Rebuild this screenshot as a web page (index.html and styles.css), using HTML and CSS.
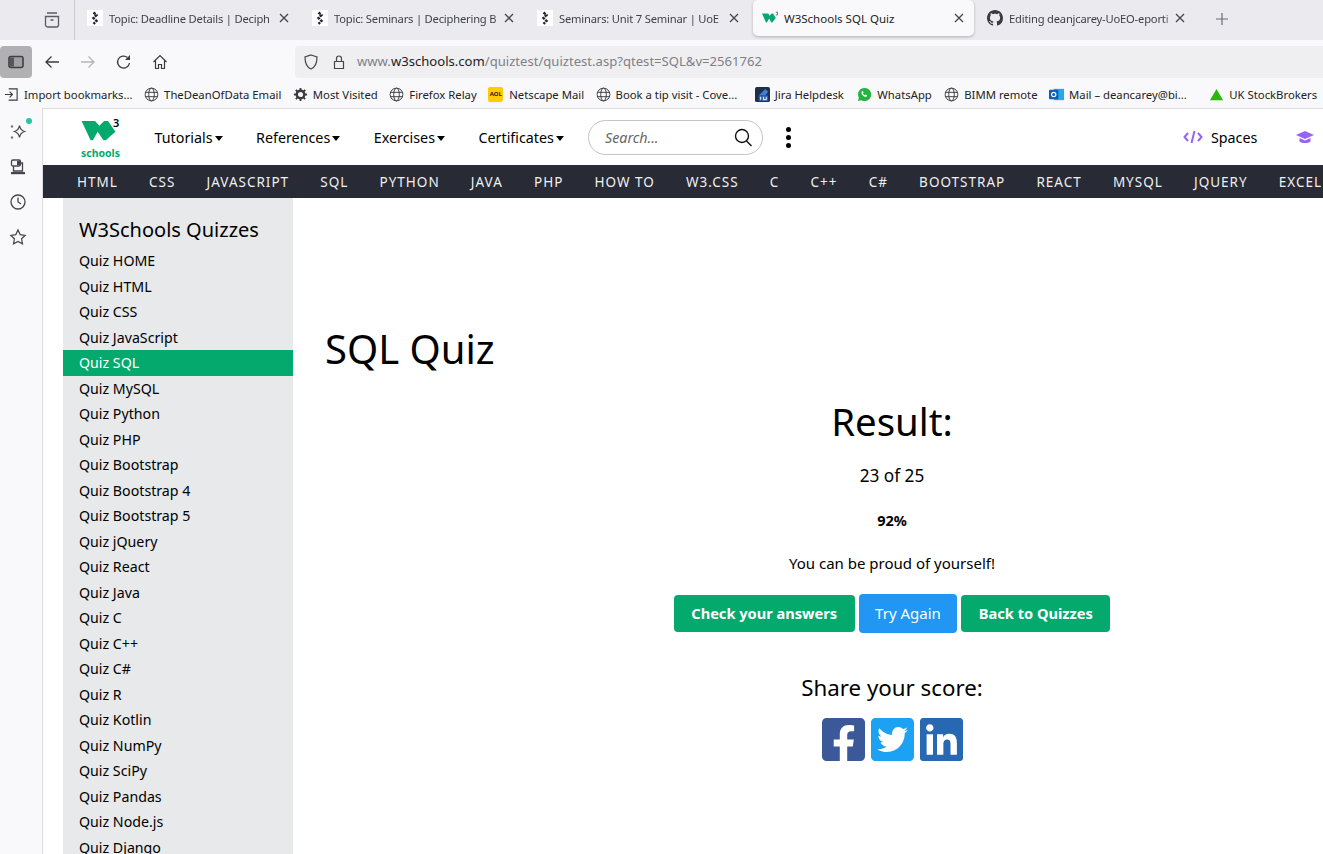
FILE: index.html
```html
<!DOCTYPE html>
<html lang="en">
<head>
    <meta charset="UTF-8">
    <title>W3Schools SQL Quiz</title>
    <link rel="stylesheet" href="styles.css">
</head>
<body>
    <svg class="defs" width="0" height="0">
        <symbol id="globe" viewBox="0 0 16 16"><g fill="none" stroke="#3a3a40" stroke-width="1"><circle cx="8" cy="8" r="6.8"/><ellipse cx="8" cy="8" rx="3" ry="6.8"/><path d="M1.5 5.7h13M1.5 10.3h13"/></g></symbol>
        <symbol id="site" viewBox="0 0 16 16"><rect width="16" height="16" fill="#fff"/><path d="M6.500 2.500L9.500 5 6.500 8l3 3-3 2.800" fill="none" stroke="#222" stroke-width="2.400" stroke-dasharray="2.600 1"/></symbol>
        <symbol id="close" viewBox="0 0 10 10"><path d="M1 1l8 8M9 1l-8 8" stroke="#45454c" stroke-width="1.300" fill="none"/></symbol>
    </svg>

    <!-- tab strip -->
    <div class="tabs">
        <div class="tab-list-btn">
            <svg width="18" height="18" viewBox="0 0 18 18" fill="none" stroke="#5b5b66" stroke-width="1.300"><path d="M4 2h10M2.500 5.500h13V14a2 2 0 0 1-2 2h-9a2 2 0 0 1-2-2zM7.500 9h3"/></svg>
        </div>
        <div class="tab">
            <svg class="fav"><use href="#site"/></svg>
            <span class="tab-title">Topic: Deadline Details | Deciph</span>
            <svg class="tab-x"><use href="#close"/></svg>
        </div>
        <div class="tab">
            <svg class="fav"><use href="#site"/></svg>
            <span class="tab-title">Topic: Seminars | Deciphering B</span>
            <svg class="tab-x"><use href="#close"/></svg>
        </div>
        <div class="tab third">
            <svg class="fav"><use href="#site"/></svg>
            <span class="tab-title">Seminars: Unit 7 Seminar | UoE</span>
            <svg class="tab-x"><use href="#close"/></svg>
        </div>
        <div class="tab active">
            <svg class="fav" viewBox="0 0 18 16"><path d="M0 3h7l1.500 2.500L11 3h1.500l3 5-4 5h-1L8 8.500 5.500 13h-1z" fill="#04aa6d"/><path d="M15.500 1.500h2v3h-2" fill="none" stroke="#222" stroke-width=".7"/></svg>
            <span class="tab-title plain">W3Schools SQL Quiz</span>
            <svg class="tab-x"><use href="#close"/></svg>
        </div>
        <div class="tab last">
            <svg class="fav" viewBox="0 0 16 16"><path fill="#3a3a40" d="M8 0C3.580 0 0 3.580 0 8c0 3.540 2.290 6.530 5.470 7.590.4.070.55-.17.55-.38 0-.19-.01-.82-.01-1.490-2.010.37-2.530-.49-2.690-.94-.09-.23-.48-.94-.82-1.130-.28-.15-.68-.52-.01-.53.63-.01 1.080.58 1.230.82.72 1.210 1.870.87 2.330.66.07-.52.28-.87.51-1.070-1.780-.2-3.640-.89-3.640-3.950 0-.87.31-1.590.82-2.150-.08-.2-.36-1.020.08-2.120 0 0 .67-.21 2.200.82.64-.18 1.320-.27 2-.27.68 0 1.360.09 2 .27 1.530-1.040 2.200-.82 2.200-.82.44 1.100.16 1.920.08 2.120.51.56.82 1.270.82 2.150 0 3.070-1.870 3.750-3.650 3.950.29.25.54.73.54 1.480 0 1.070-.01 1.930-.01 2.200 0 .21.15.46.55.38A8.013 8.013 0 0016 8c0-4.420-3.580-8-8-8z"/></svg>
            <span class="tab-title">Editing deanjcarey-UoEO-eporti</span>
            <svg class="tab-x"><use href="#close"/></svg>
        </div>
        <svg class="new-tab" width="14" height="14" viewBox="0 0 14 14"><path d="M7 1v12M1 7h12" stroke="#6a6a72" stroke-width="1.200"/></svg>
    </div>

    <!-- toolbar -->
    <div class="toolbar">
        <div class="side-toggle"><svg width="16" height="14" viewBox="0 0 16 14"><rect x="1" y="1.500" width="14" height="11" rx="2" fill="#a0a0a4" stroke="#3f3f45" stroke-width="1.600"/><rect x="2" y="2.500" width="4" height="9" fill="#55555b"/></svg></div>
        <svg class="tool-icon" viewBox="0 0 16 16"><path d="M15 8H2M7.500 2.500L2 8l5.500 5.500" fill="none" stroke="#3a3a40" stroke-width="1.300"/></svg>
        <svg class="tool-icon" viewBox="0 0 16 16"><path d="M1 8h13M8.500 2.500L14 8l-5.500 5.500" fill="none" stroke="#b4b4ba" stroke-width="1.300"/></svg>
        <svg class="tool-icon" viewBox="0 0 16 16"><path d="M13.500 9a6 6 0 1 1-2-5.500" fill="none" stroke="#3a3a40" stroke-width="1.300"/><path d="M14 1v5H9z" fill="#3a3a40"/></svg>
        <svg class="tool-icon" viewBox="0 0 16 16"><path d="M1.500 8L8 1.500 14.500 8M3.500 6.500V14.500h3v-4h3v4h3V6.500" fill="none" stroke="#3a3a40" stroke-width="1.200"/></svg>
        <div class="url-bar">
            <svg class="url-icon" viewBox="0 0 16 16"><path d="M8 1l6 2c0 6-1 10-6 12C3 13 2 9 2 3z" fill="none" stroke="#45454c" stroke-width="1.200"/></svg>
            <svg class="url-icon" viewBox="0 0 16 16"><path d="M3.500 7.500h9v7h-9zM5.500 7.500V4.500a2.500 2.500 0 0 1 5 0v3" fill="none" stroke="#45454c" stroke-width="1.200"/></svg>
            <span class="url"><span class="url-soft">www.</span>w3schools.com<span class="url-soft">/quiztest/quiztest.asp?qtest=SQL&amp;v=2561762</span></span>
        </div>
    </div>

    <!-- bookmarks -->
    <div class="bookmarks">
        <span class="mark"><svg class="mark-icon" viewBox="0 0 16 16"><path d="M1 8h8M6 5l3 3-3 3M5 2h9v12H5" fill="none" stroke="#3a3a40" stroke-width="1.200"/></svg>Import bookmarks...</span>
        <span class="mark"><svg class="mark-icon"><use href="#globe"/></svg>TheDeanOfData Email</span>
        <span class="mark"><svg class="mark-icon" viewBox="0 0 16 16"><circle cx="8" cy="8" r="4" fill="none" stroke="#3a3a40" stroke-width="2.500"/><path d="M8 1v14M1 8h14M3 3l10 10M13 3L3 13" stroke="#3a3a40" stroke-width="2" stroke-dasharray="2.500 9"/></svg>Most Visited</span>
        <span class="mark"><svg class="mark-icon"><use href="#globe"/></svg>Firefox Relay</span>
        <span class="mark"><span class="aol">AOL</span>Netscape Mail</span>
        <span class="mark"><svg class="mark-icon"><use href="#globe"/></svg>Book a tip visit - Cove...</span>
        <span class="mark jira"><svg class="mark-icon" viewBox="0 0 16 16"><rect width="16" height="16" rx="2" fill="#1e2f4a"/><path d="M4 9l7-7 3 3-3 4z" fill="#3d7fd6"/><rect x="4" y="9" width="10" height="6" fill="#2f62a8"/><path d="M6 10.500v3M9 10.500v3h3v-3" fill="none" stroke="#fff" stroke-width="1"/></svg>Jira Helpdesk</span>
        <span class="mark whatsapp"><svg class="mark-icon" viewBox="0 0 16 16"><path d="M8 1a7 7 0 0 0-6 10.500L1 15l3.600-1A7 7 0 1 0 8 1z" fill="#25b33f"/><path d="M5.500 4.500c-1 1-1 2.500.5 4.200s3.200 2.300 4.300 1.400l.4-1.200-1.600-.9-.8.8c-1-.4-1.700-1.200-2-2l.7-.8-.8-1.700z" fill="#fff"/></svg>WhatsApp</span>
        <span class="mark bimm"><svg class="mark-icon"><use href="#globe"/></svg>BIMM remote</span>
        <span class="mark"><svg class="mark-icon" viewBox="0 0 16 16"><rect x="5" y="2" width="11" height="12" fill="#28a8ea"/><rect y="3" width="10" height="10" rx="1" fill="#0f5fb0"/><circle cx="5" cy="8" r="2.300" fill="none" stroke="#fff" stroke-width="1.300"/></svg>Mail – deancarey@bi...</span>
        <span class="mark wide"><svg class="mark-icon" viewBox="0 0 16 16"><path d="M8 2l7 12H1z" fill="#2eb50c"/></svg>UK StockBrokers</span>
    </div>

    <div class="browser">
        <!-- firefox sidebar -->
        <div class="rail">
            <span class="rail-btn">
                <svg class="rail-icon" viewBox="0 0 18 18"><path d="M10.500 2.500c.6 3.400 1.900 5 5 6-3.100 1-4.400 2.600-5 6-.6-3.400-1.900-5-5-6 3.100-1 4.400-2.600 5-6z" fill="none" stroke="#45454c" stroke-width="1.300"/><circle cx="3" cy="3.500" r="1.200" fill="#77777d"/><circle cx="3" cy="14.500" r="1.200" fill="#77777d"/></svg>
                <span class="rail-dot"></span>
            </span>
            <svg class="rail-icon" viewBox="0 0 18 18"><rect x="2.500" y="2" width="9" height="6" rx="1.500" fill="none" stroke="#45454c" stroke-width="1.300"/><rect x="8" y="3" width="3" height="4" fill="#45454c"/><path d="M4.500 8v5h9V5h-2" fill="none" stroke="#45454c" stroke-width="1.300"/><path d="M2 14h14v2.200H2z" fill="#45454c"/></svg>
            <svg class="rail-icon" viewBox="0 0 18 18"><circle cx="9" cy="9" r="7" fill="none" stroke="#45454c" stroke-width="1.300"/><path d="M9 4.500V9l3 2" fill="none" stroke="#45454c" stroke-width="1.300"/></svg>
            <svg class="rail-icon" viewBox="0 0 18 18"><path d="M9 2l2.200 4.600 5 .7-3.600 3.500.9 5L9 13.400l-4.500 2.400.9-5L1.800 7.300l5-.7z" fill="none" stroke="#45454c" stroke-width="1.200"/></svg>
        </div>

        <div class="page">
            <div class="top-nav">
                <div class="logo">
                    <span class="logo-top">
                        <svg class="logo-w" viewBox="30 35 105 62"><path d="M30 35h42l13 15 15-15h12l23 33-30 27h-7L80 68 65 95h-7z" fill="#04aa6d"/></svg>
                        <span class="logo-3">3</span>
                    </span>
                    <span class="logo-name">schools</span>
                </div>
                <span class="nav-link">Tutorials<i class="caret"></i></span>
                <span class="nav-link">References<i class="caret"></i></span>
                <span class="nav-link">Exercises<i class="caret"></i></span>
                <span class="nav-link">Certificates<i class="caret"></i></span>
                <div class="search">
                    <span class="search-text">Search...</span>
                    <svg width="19" height="19" viewBox="0 0 19 19" fill="none" stroke="#111" stroke-width="1.400"><circle cx="8" cy="8" r="6.500"/><path d="M12.500 13l5 5"/></svg>
                </div>
                <div class="dots"><i></i><i></i><i></i></div>
                <div class="spaces">
                    <svg width="20" height="14" viewBox="0 0 20 14" fill="none" stroke="#9763f6" stroke-width="2"><path d="M5 3L1.500 7 5 11M15 3l3.500 4L15 11M11.500 1l-3 12"/></svg>
                    <span>Spaces</span>
                </div>
                <svg class="cap" width="18" height="14" viewBox="0 0 18 14"><path d="M9 1L0 5l9 4 9-4z" fill="#9763f6"/><path d="M3.500 8v3.500C6 13.500 12 13.500 14.500 11.500V8L9 10.500z" fill="#9763f6"/></svg>
            </div>

            <div class="sub-nav">
                <span>HTML</span><span>CSS</span><span>JAVASCRIPT</span><span>SQL</span><span>PYTHON</span><span>JAVA</span><span>PHP</span><span>HOW TO</span><span>W3.CSS</span><span>C</span><span>C++</span><span>C#</span><span>BOOTSTRAP</span><span>REACT</span><span>MYSQL</span><span>JQUERY</span><span>EXCEL</span>
            </div>

            <div class="content">
                <aside class="quiz-menu">
                    <h2>W3Schools Quizzes</h2>
                    <a>Quiz HOME</a>
                    <a>Quiz HTML</a>
                    <a>Quiz CSS</a>
                    <a>Quiz JavaScript</a>
                    <a class="current">Quiz SQL</a>
                    <a>Quiz MySQL</a>
                    <a>Quiz Python</a>
                    <a>Quiz PHP</a>
                    <a>Quiz Bootstrap</a>
                    <a>Quiz Bootstrap 4</a>
                    <a>Quiz Bootstrap 5</a>
                    <a>Quiz jQuery</a>
                    <a>Quiz React</a>
                    <a>Quiz Java</a>
                    <a>Quiz C</a>
                    <a>Quiz C++</a>
                    <a>Quiz C#</a>
                    <a>Quiz R</a>
                    <a>Quiz Kotlin</a>
                    <a>Quiz NumPy</a>
                    <a>Quiz SciPy</a>
                    <a>Quiz Pandas</a>
                    <a>Quiz Node.js</a>
                    <a>Quiz Django</a>
                </aside>

                <main class="quiz-main">
                    <h1>SQL Quiz</h1>
                    <div class="result">
                        <h2 class="result-title">Result:</h2>
                        <p class="score">23 of 25</p>
                        <p class="percent">92%</p>
                        <p class="proud">You can be proud of yourself!</p>
                        <div class="buttons">
                            <a class="btn green">Check your answers</a>
                            <a class="btn blue">Try Again</a>
                            <a class="btn green">Back to Quizzes</a>
                        </div>
                        <h3 class="share">Share your score:</h3>
                        <div class="social">
                            <svg viewBox="0 32 448 448"><path fill="#3b5998" d="M400 32H48A48 48 0 0 0 0 80v352a48 48 0 0 0 48 48h137.250V327.690h-63V256h63v-54.640c0-62.150 37-96.480 93.670-96.480 27.140 0 55.520 4.840 55.520 4.840v61h-31.270c-30.810 0-40.420 19.120-40.420 38.730V256h68.780l-11 71.690h-57.780V480H400a48 48 0 0 0 48-48V80a48 48 0 0 0-48-48z"/></svg>
                            <svg viewBox="0 32 448 448"><path fill="#1da1f2" d="M400 32H48C21.500 32 0 53.500 0 80v352c0 26.500 21.500 48 48 48h352c26.500 0 48-21.500 48-48V80c0-26.500-21.500-48-48-48zm-48.900 158.800c.2 2.800.2 5.700.2 8.500 0 86.700-66 186.600-186.600 186.600-37.200 0-71.700-10.800-100.700-29.400 5.300.6 10.400.8 15.800.8 30.700 0 58.900-10.400 81.400-28-28.800-.6-53-19.500-61.300-45.500 10.100 1.500 19.200 1.500 29.600-1.200-30-6.100-52.500-32.500-52.500-64.400v-.8c8.700 4.900 18.900 7.900 29.600 8.300a65.447 65.447 0 0 1-29.200-54.600c0-12.200 3.200-23.400 8.900-33.100 32.300 39.800 80.800 65.800 135.200 68.600-9.300-44.500 24-80.600 64-80.600 18.900 0 35.900 7.900 47.900 20.700 14.800-2.800 29-8.300 41.600-15.800-4.900 15.200-15.100 27.900-29.600 36.300 13.200-1.400 26-5.100 37.800-10.200-8.900 13.100-20.100 24.700-32.900 34z"/></svg>
                            <svg viewBox="0 32 448 448"><path fill="#2867b2" d="M416 32H31.900C14.300 32 0 46.500 0 64.300v383.400C0 465.500 14.300 480 31.900 480H416c17.600 0 32-14.500 32-32.300V64.300c0-17.800-14.400-32.300-32-32.300zM135.400 416H69V202.200h66.500V416zm-33.200-243c-21.300 0-38.500-17.300-38.500-38.500S80.900 96 102.200 96c21.200 0 38.500 17.300 38.500 38.500 0 21.300-17.200 38.500-38.500 38.500zm282.100 243h-66.400V312c0-24.800-.5-56.700-34.500-56.700-34.600 0-39.900 27-39.900 54.900V416h-66.400V202.200h63.700v29.200h.9c8.900-16.800 30.600-34.500 62.900-34.500 67.200 0 79.700 44.300 79.700 101.900V416z"/></svg>
                        </div>
                    </div>
                </main>
            </div>
        </div>
    </div>
</body>
</html>
```

FILE: styles.css
```css
html, body {
    height: 854px;
    overflow: hidden;
}

body {
    margin: 0;
    font-family: "Noto Sans", "Open Sans", sans-serif;
    color: #000;
    background-color: #f9f9fb;
}

.defs {
    position: absolute;
}

/* tab strip */
.tabs {
    display: flex;
    align-items: flex-start;
    height: 40px;
    padding-left: 33px;
    background-color: #eaeaef;
    overflow: hidden;
}

.tab-list-btn {
    display: flex;
    align-items: center;
    width: 42px;
    height: 40px;
    padding-left: 10px;
    margin-right: 10px;
    box-sizing: border-box;
    border-right: 1px solid #c9c9cf;
}

.tab {
    display: flex;
    align-items: center;
    flex: none;
    width: 225px;
    height: 36px;
    padding: 0 21px 0 2px;
    box-sizing: border-box;
    font-size: 11.2px;
    letter-spacing: -0.2px;
    color: #3f3f46;
}

.tab.third {
    width: 218px;
    padding-right: 14px;
}

.tab.active {
    width: 221px;
    margin-right: 3px;
    padding: 0 10px 0 9px;
    background-color: #f9f9fb;
    border-radius: 5px;
    box-shadow: 0 1px 3px rgba(0, 0, 0, 0.25);
    font-size: 11.5px;
    letter-spacing: 0;
    color: #222;
}

.tab.last {
    width: 217px;
    padding: 0 9px 0 10px;
}

.fav {
    flex: none;
    width: 16px;
    height: 16px;
    margin-right: 6px;
}

.tab-title {
    flex: 1;
    min-width: 0;
    white-space: nowrap;
    -webkit-mask-image: linear-gradient(to left, transparent 0, #000 8px);
    mask-image: linear-gradient(to left, transparent 0, #000 8px);
}

.tab-title.plain {
    -webkit-mask-image: none;
    mask-image: none;
}

.tab-x {
    flex: none;
    width: 10px;
    height: 10px;
    margin-left: 2px;
}

.new-tab {
    margin: 12px 0 0 21px;
}

/* toolbar */
.toolbar {
    display: flex;
    align-items: center;
    height: 40px;
    padding-top: 4px;
    box-sizing: border-box;
}

.side-toggle {
    display: flex;
    align-items: center;
    justify-content: center;
    width: 32px;
    height: 32px;
    margin-right: 12px;
    background-color: #b1b1b4;
    border-radius: 4px;
}

.tool-icon {
    width: 16px;
    height: 16px;
    margin-right: 20px;
}

.url-bar {
    display: flex;
    align-items: center;
    flex: 1;
    height: 32px;
    margin-left: 107px;
    padding-left: 8px;
    background-color: #efeff2;
    border-radius: 4px 0 0 4px;
}

.url-icon {
    width: 16px;
    height: 16px;
    margin-right: 12px;
}

.url {
    margin: 0 0 2px -2px;
    font-size: 13.1px;
    color: #222;
}

.url-soft {
    color: #808086;
}

/* bookmarks */
.bookmarks {
    display: flex;
    align-items: center;
    gap: 11.5px;
    height: 28px;
    padding-left: 4px;
    font-size: 11.3px;
    color: #222;
    white-space: nowrap;
}

.mark {
    display: flex;
    align-items: center;
}

.mark-icon {
    width: 15px;
    height: 15px;
    margin-right: 5px;
}

.mark.jira {
    margin-left: 6px;
}

.mark.whatsapp {
    margin-left: 2px;
}

.mark.bimm {
    margin-left: 1px;
}

.mark.wide {
    margin-left: 11px;
}

.aol {
    width: 15px;
    height: 15px;
    margin-right: 6px;
    background-color: #ffcc00;
    border-radius: 2px;
    font-size: 6px;
    font-weight: 700;
    line-height: 15px;
    text-align: center;
}

/* left rail + page */
.browser {
    display: flex;
    height: 746px;
}

.rail {
    display: flex;
    flex-direction: column;
    align-items: center;
    gap: 17px;
    flex: none;
    width: 43px;
    padding: 15px 7px 0 0;
    box-sizing: border-box;
    border-right: 1px solid #dcdce0;
}

.rail-btn {
    position: relative;
    height: 18px;
}

.rail-dot {
    position: absolute;
    top: -5px;
    right: -5px;
    width: 6px;
    height: 6px;
    background-color: #2bc4a0;
    border-radius: 50%;
}

.rail-icon {
    width: 18px;
    height: 18px;
}

.page {
    flex: 1;
    min-width: 0;
    overflow: hidden;
    background-color: #fff;
    border-top: 1px solid #dcdce0;
}

/* site header */
.top-nav {
    display: flex;
    align-items: center;
    height: 56px;
    padding-left: 38px;
    font-size: 14.3px;
    white-space: nowrap;
}

.logo {
    display: flex;
    flex-direction: column;
    flex: none;
    align-items: center;
    width: 39px;
    margin-right: 1px;
}

.logo-top {
    display: flex;
    width: 39px;
    height: 26px;
}

.logo-w {
    flex: none;
    width: 35px;
    height: 20px;
    margin-top: 6px;
}

.logo-3 {
    margin-left: -3px;
    font-size: 11px;
    font-weight: 600;
    line-height: 16px;
}

.logo-name {
    margin-top: 6px;
    font-size: 10.5px;
    font-weight: 700;
    line-height: 13px;
    color: #04aa6d;
}

.nav-link {
    margin-left: 33.5px;
}

.caret {
    display: inline-block;
    margin-left: 2px;
    vertical-align: 2px;
    border-top: 5px solid #000;
    border-left: 4.5px solid transparent;
    border-right: 4.5px solid transparent;
}

.search {
    display: flex;
    align-items: center;
    justify-content: space-between;
    flex: none;
    width: 175px;
    height: 35px;
    margin-left: 24px;
    padding: 0 9px 0 16px;
    box-sizing: border-box;
    border: 1px solid #c4c4c4;
    border-radius: 18px;
}

.search-text {
    font-style: italic;
    color: #666;
}

.dots {
    display: flex;
    flex-direction: column;
    flex: none;
    gap: 3px;
    margin-left: 23px;
}

.dots i {
    width: 5px;
    height: 5px;
    background-color: #000;
    border-radius: 50%;
}

.spaces {
    display: flex;
    align-items: center;
    flex: none;
    gap: 8px;
    margin-left: 392px;
}

.cap {
    flex: none;
    margin-left: 39px;
}

.sub-nav {
    display: flex;
    gap: 31.2px;
    align-items: center;
    height: 33px;
    padding-left: 34px;
    background-color: #282a35;
    color: #f0f0f0;
    font-size: 13.5px;
    letter-spacing: 1px;
    white-space: nowrap;
}

/* quiz menu */
.content {
    display: flex;
    align-items: flex-start;
}

.quiz-menu {
    flex: none;
    width: 230px;
    margin-left: 20px;
    padding: 16px 0 40px;
    background-color: #e7e9eb;
}

.quiz-menu h2 {
    margin: 0 0 2px;
    padding-left: 16px;
    font-size: 20px;
    font-weight: 400;
    line-height: 32px;
}

.quiz-menu a {
    display: block;
    height: 25.5px;
    padding-left: 16px;
    font-size: 14.2px;
    line-height: 26.2px;
}

.quiz-menu a.current {
    background-color: #04aa6d;
    color: #fff;
}

/* result */
.quiz-main {
    flex: none;
    width: 1134px;
    margin-left: 32px;
}

.quiz-main h1 {
    margin: 120px 0 0;
    font-size: 40px;
    font-weight: 400;
    line-height: 62px;
}

.result {
    text-align: center;
}

.result-title {
    margin: 11px 0 0;
    font-size: 38.4px;
    font-weight: 400;
    line-height: 60px;
}

.score {
    margin: 12px 0 0;
    font-size: 17.2px;
    line-height: 26px;
}

.percent {
    margin: 19px 0 0;
    font-size: 14.5px;
    font-weight: 700;
    line-height: 24px;
}

.proud {
    margin: 19px 0 0;
    font-size: 15px;
    line-height: 24px;
}

.buttons {
    display: flex;
    justify-content: center;
    align-items: center;
    gap: 4px;
    margin-top: 19px;
}

.btn {
    display: block;
    box-sizing: border-box;
    border-radius: 4px;
    color: #fff;
    font-size: 14.6px;
    text-align: center;
}

.btn.green {
    height: 37px;
    padding: 0 17.5px;
    background-color: #04aa6d;
    font-weight: 700;
    line-height: 37px;
}

.btn.blue {
    height: 39px;
    padding: 0 16.5px;
    background-color: #2196f3;
    font-size: 15px;
    line-height: 39px;
}

.share {
    margin: 37px 0 0;
    font-size: 22.3px;
    font-weight: 400;
    line-height: 36px;
}

.social {
    display: flex;
    justify-content: center;
    gap: 6px;
    margin-top: 12px;
}

.social svg {
    width: 43px;
    height: 43px;
}
```
